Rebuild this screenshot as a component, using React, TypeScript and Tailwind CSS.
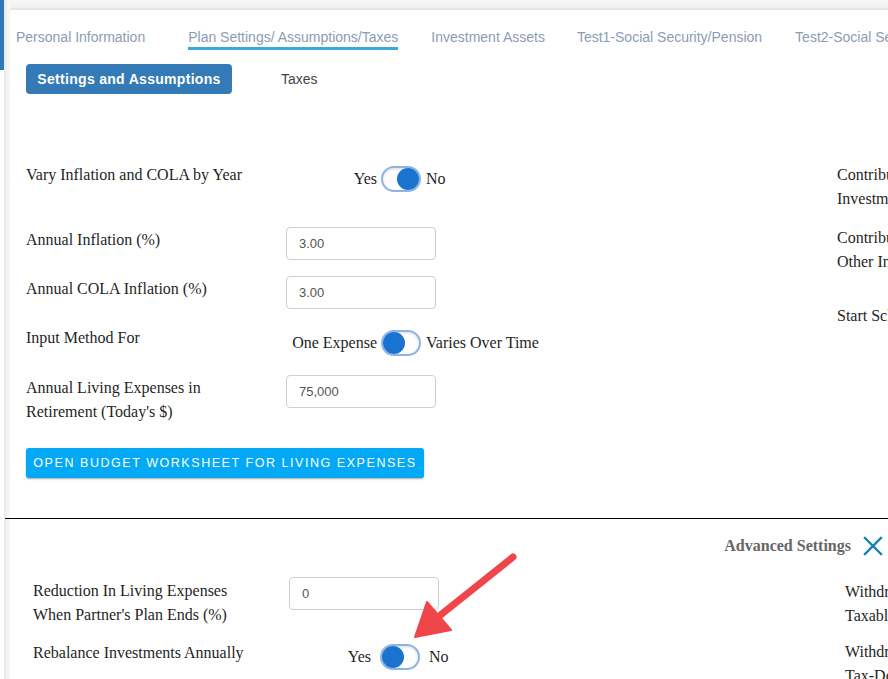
import React from 'react'

const serif = { fontFamily: '"Liberation Serif", "Times New Roman", serif' }
const sans = { fontFamily: '"Liberation Sans", Arial, sans-serif' }

function Toggle({ on }: { on: boolean }) {
  return (
    <span className={`relative inline-flex h-[26px] w-[40px] shrink-0 items-center rounded-full border-2 border-[#8fb3e3] bg-white shadow-[inset_0_1px_3px_rgba(0,0,0,0.15)] ${on ? 'justify-end' : 'justify-start'}`}>
      <span className="h-[22px] w-[22px] rounded-full bg-[#1a73cf]" />
    </span>
  )
}

function Field({ value }: { value: string }) {
  return (
    <div
      className="flex h-[33px] w-[150px] shrink-0 items-center rounded-[4px] border border-[#cfcfcf] bg-white pl-[12px] text-[13px] text-[#555]"
      style={sans}
    >
      {value}
    </div>
  )
}

function SwitchRow({ left, right, on }: { left: string; right: string; on: boolean }) {
  return (
    <div className="flex items-center text-[16px] text-[#1f1f1f]" style={serif}>
      <span className="w-[95px] whitespace-nowrap pr-[4px] text-right">{left}</span>
      <Toggle on={on} />
      <span className="ml-[5px] whitespace-nowrap">{right}</span>
    </div>
  )
}

const tabs = [
  { label: 'Personal Information', active: false, ml: 'ml-[6px]' },
  { label: 'Plan Settings/ Assumptions/Taxes', active: true, ml: 'ml-[43px]' },
  { label: 'Investment Assets', active: false, ml: 'ml-[33px]' },
  { label: 'Test1-Social Security/Pension', active: false, ml: 'ml-[32px]' },
  { label: 'Test2-Social Security/Pension', active: false, ml: 'ml-[33px]' },
]

export default function App() {
  return (
    <div className="relative flex h-[679px] w-[888px] overflow-hidden bg-white">
      {/* left rail */}
      <div className="flex w-[4px] shrink-0 flex-col">
        <div className="h-[70px] bg-[#2f77b6]" />
      </div>
      <div className="w-[6px] shrink-0 bg-gradient-to-r from-[#e9e9e9] to-[#fafafa]" />

      <div className="min-w-0 flex-1">
        {/* top edge */}
        <div className="h-[8px] bg-gradient-to-b from-[#f7f7f7] to-[#f0f0f0]" />
        <div className="h-[2px] bg-[#e6e6e6]" />

        {/* tabs */}
        <div className="mt-[18px] flex whitespace-nowrap text-[14px] text-[#8c9bb6]" style={sans}>
          {tabs.map(t => (
            <div key={t.label} className={`${t.ml} flex flex-col`}>
              <span className="leading-[18px]">{t.label}</span>
              <span className={`mt-[1px] h-[3px] ${t.active ? 'bg-[#3ba9da]' : 'bg-transparent'}`} />
            </div>
          ))}
        </div>

        {/* sub tabs */}
        <div className="mt-[14px] flex items-center pl-[16px]" style={sans}>
          <button className="h-[30px] w-[206px] rounded-[4px] bg-[#337ab7] text-[14px] font-bold tracking-[0.3px] text-white">
            Settings and Assumptions
          </button>
          <span className="ml-[49px] text-[14px] text-[#444]">Taxes</span>
        </div>

        {/* main form */}
        <div className="mt-[68px] flex pl-[16px]">
          <div className="flex w-[811px] shrink-0 flex-col">
            <div className="flex h-[65px] text-[16px] leading-[24px] text-[#1f1f1f]" style={serif}>
              <span className="w-[260px] pt-[1px]">Vary Inflation and COLA by Year</span>
              <div className="mt-[4px]">
                <SwitchRow left="Yes" right="No" on />
              </div>
            </div>
            <div className="flex h-[49px] text-[16px] leading-[24px] text-[#1f1f1f]" style={serif}>
              <span className="w-[260px] pt-[1px]">Annual Inflation (%)</span>
              <Field value="3.00" />
            </div>
            <div className="flex h-[49px] text-[16px] leading-[24px] text-[#1f1f1f]" style={serif}>
              <span className="w-[260px] pt-[1px]">Annual COLA Inflation (%)</span>
              <Field value="3.00" />
            </div>
            <div className="flex h-[50px] text-[16px] leading-[24px] text-[#1f1f1f]" style={serif}>
              <span className="w-[260px] pt-[1px]">Input Method For</span>
              <div className="mt-[5px]">
                <SwitchRow left="One Expense" right="Varies Over Time" on={false} />
              </div>
            </div>
            <div className="flex text-[16px] leading-[24px] text-[#1f1f1f]" style={serif}>
              <span className="w-[260px] pt-[1px]">
                Annual Living Expenses in
                <br />
                Retirement (Today's $)
              </span>
              <Field value="75,000" />
            </div>
            <button
              className="mt-[24px] h-[30px] w-[398px] rounded-[3px] bg-[#03a9f4] text-[12.5px] tracking-[1.55px] text-white shadow-[0_1px_2px_rgba(0,0,0,0.35)]"
              style={sans}
            >
              OPEN BUDGET WORKSHEET FOR LIVING EXPENSES
            </button>
          </div>
          <div className="flex flex-col whitespace-nowrap pt-[1px] text-[16px] leading-[24px] text-[#1f1f1f]" style={serif}>
            <span>Contributions to</span>
            <span>Investment Assets</span>
            <span className="mt-[15px]">Contributions to</span>
            <span>Other Income</span>
            <span className="mt-[30px]">Start Schedule</span>
          </div>
        </div>

        {/* divider */}
        <div className="mt-[40px] -ml-[5px] h-px bg-black" />

        {/* advanced */}
        <div className="mt-[15px] flex items-center justify-end pr-[5px]">
          <span className="text-[16px] font-bold text-[#666]" style={serif}>Advanced Settings</span>
          <svg className="ml-[12px]" width="20" height="20" viewBox="0 0 20 20">
            <path d="M2 2 L18 18 M18 2 L2 18" stroke="#1b80b3" strokeWidth="2.4" strokeLinecap="square" />
          </svg>
        </div>

        <div className="mt-[19px] flex pl-[23px]">
          <div className="flex w-[812px] shrink-0 flex-col">
            <div className="flex h-[63px] text-[16px] leading-[24px] text-[#1f1f1f]" style={serif}>
              <span className="w-[256px] pt-[2px]">
                Reduction In Living Expenses
                <br />
                When Partner's Plan Ends (%)
              </span>
              <Field value="0" />
            </div>
            <div className="flex text-[16px] leading-[24px] text-[#1f1f1f]" style={serif}>
              <span className="w-[258px] pt-[1px]">Rebalance Investments Annually</span>
              <div className="mt-[4px] flex items-center">
                <span className="w-[89px] pr-[9px] text-right">Yes</span>
                <Toggle on={false} />
                <span className="ml-[9px]">No</span>
              </div>
            </div>
          </div>
          <div className="flex flex-col whitespace-nowrap pt-[3px] text-[16px] leading-[24px] text-[#1f1f1f]" style={serif}>
            <span>Withdrawals from</span>
            <span>Taxable Accounts</span>
            <span className="mt-[12px]">Withdrawals from</span>
            <span>Tax-Deferred</span>
          </div>
        </div>
      </div>

      {/* annotation arrow */}
      <svg className="pointer-events-none absolute left-0 top-0" width="888" height="679">
        <line x1="513" y1="557" x2="438" y2="617" stroke="#f0454a" strokeWidth="7" strokeLinecap="round" />
        <path d="M415 637 L427 602 L451 630 Z" fill="#f0454a" stroke="#f0454a" strokeWidth="2" strokeLinejoin="round" />
      </svg>
    </div>
  )
}
